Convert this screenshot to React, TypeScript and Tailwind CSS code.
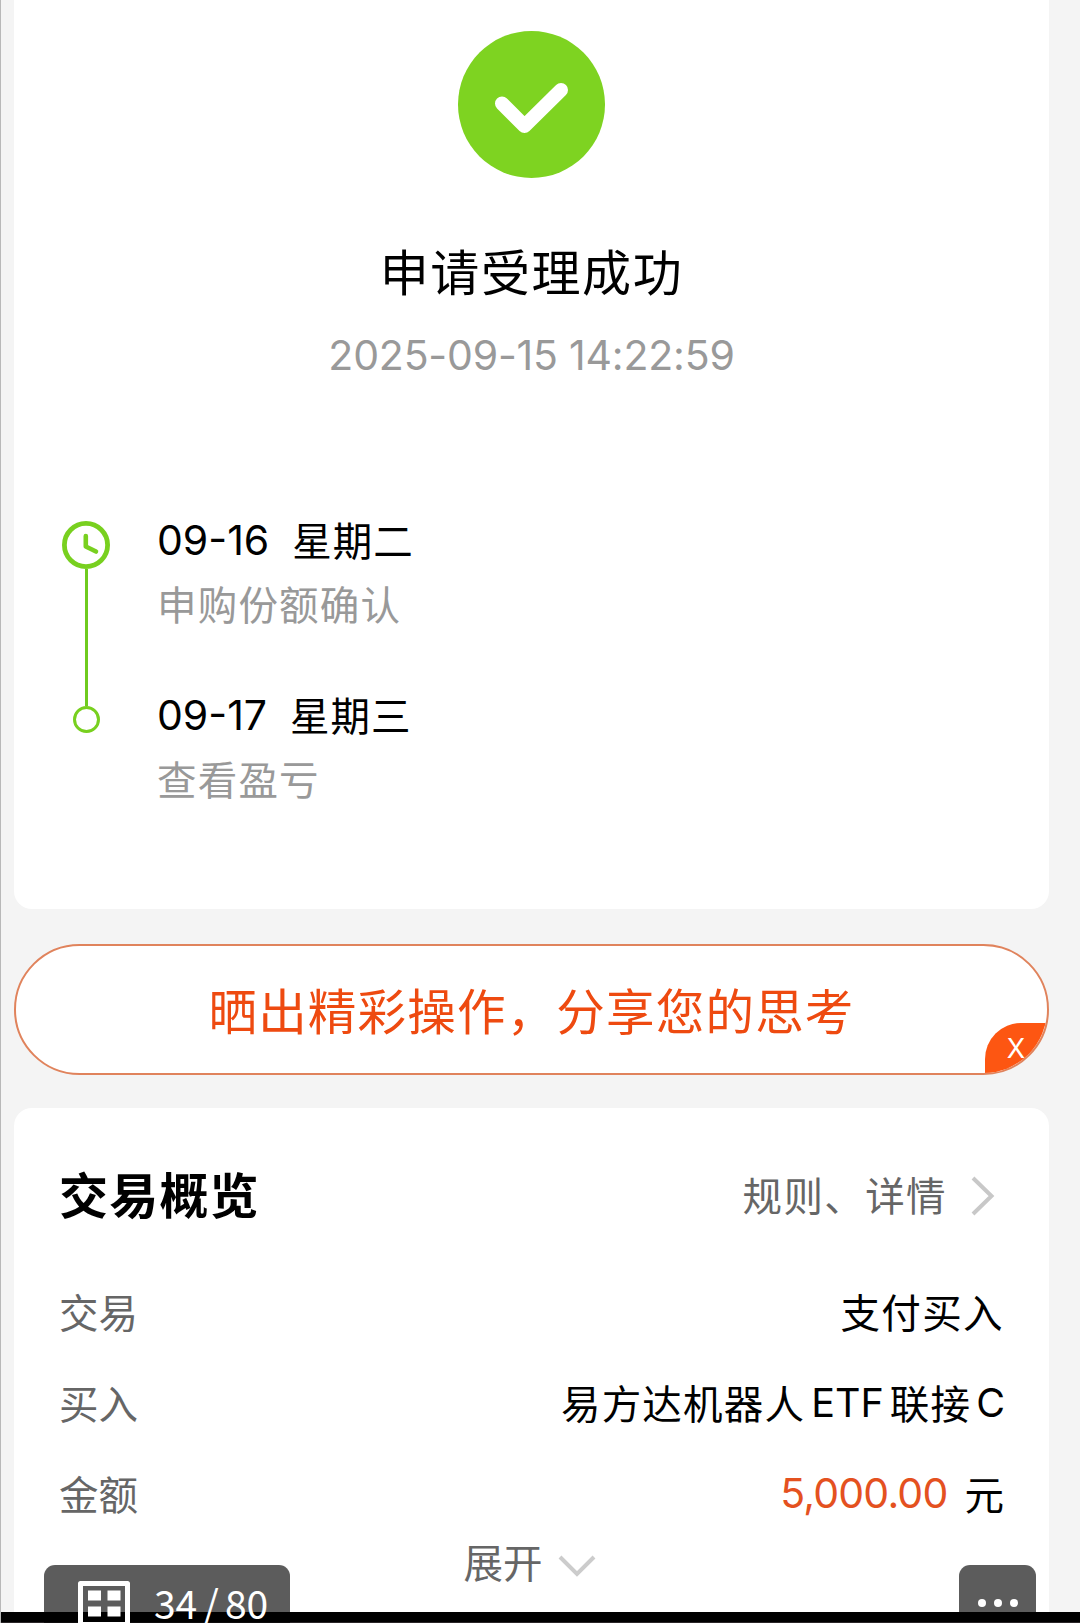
import type { ReactNode } from "react";

type TimelineItem = {
  date: string;
  weekday: string;
  text: string;
};

type DetailRowProps = {
  label: string;
  children: ReactNode;
};

const timeline: TimelineItem[] = [
  { date: "09-16", weekday: "星期二", text: "申购份额确认" },
  { date: "09-17", weekday: "星期三", text: "查看盈亏" },
];

const SuccessIcon = () => (
  <svg className="size-[147px]" viewBox="0 0 147 147" fill="none">
    <circle cx="73.5" cy="73.5" r="73.5" fill="#7ed321" />
    <path
      d="M44 72.5 66.5 95 103 59"
      stroke="#fff"
      strokeWidth="14"
      strokeLinecap="round"
      strokeLinejoin="round"
    />
  </svg>
);

const ClockIcon = () => (
  <svg className="size-12 shrink-0" viewBox="0 0 48 48" fill="none">
    <circle cx="24" cy="24" r="21.6" stroke="#78d01f" strokeWidth="4.8" />
    <path
      d="M23.8 15V25.5L34 30.5"
      stroke="#78d01f"
      strokeWidth="4.6"
      strokeLinecap="round"
      strokeLinejoin="round"
    />
  </svg>
);

const GridIcon = () => (
  <svg className="h-[42px] w-[52px]" viewBox="0 0 52 42" fill="none">
    <rect x="2.5" y="2.5" width="47" height="41" stroke="#fff" strokeWidth="5" strokeLinejoin="round" />
    <path d="M10 9.5h13v10H10zM29.5 9.5h13v10h-13zM10 25.5h13v10H10zM29.5 25.5h13v10h-13z" fill="#fff" />
  </svg>
);

const DetailRow = ({ label, children }: DetailRowProps) => (
  <div className="flex h-[91px] items-center justify-between text-[39.5px] leading-[50px]">
    <span className="text-[#666]">{label}</span>
    <span className="flex items-center text-black">{children}</span>
  </div>
);

const ResultCard = () => (
  <section className="h-[909px] rounded-b-[18px] bg-white pt-[31px]">
    <div className="flex flex-col items-center">
      <SuccessIcon />
      <h1 className="mt-[66px] text-[49px] leading-[60px] tracking-[1.6px] text-black">
        申请受理成功
      </h1>
      <p className="mt-[26px] text-[41px] leading-[50px] tracking-[-0.2px] text-[#999]">
        2025-09-15 14:22:59
      </p>
    </div>
    <div className="mt-[135px] flex pl-12">
      <div className="flex w-12 flex-col items-center pt-[6px]">
        <ClockIcon />
        <div className="h-[137px] w-[3px] bg-[#6fcb1f]" />
        <div className="size-[27px] rounded-full border-[3px] border-[#78d01f]" />
      </div>
      <ul className="ml-[47px] flex flex-col gap-[61px]">
        {timeline.map(({ date, weekday, text }) => (
          <li key={date} className="h-[114px]">
            <div className="flex h-[50px] gap-[23px] text-[39.5px] leading-[50px] text-black">
              <span className="text-[41px]">{date}</span>
              <span className="pt-[2px] tracking-[1px]">{weekday}</span>
            </div>
            <p className="mt-4 text-[39.5px] leading-[50px] tracking-[1.2px] text-[#999]">
              {text}
            </p>
          </li>
        ))}
      </ul>
    </div>
  </section>
);

const ShareBanner = () => (
  <div className="relative mt-[35px] flex h-[131px] items-center justify-center overflow-hidden rounded-[66px] border-2 border-[#e0835c] bg-white pt-[6px]">
    <span className="text-[48.5px] leading-[60px] tracking-[1.2px] text-[#ee4a10]">
      晒出精彩操作，分享您的思考
    </span>
    <button className="absolute -right-[2px] -bottom-[2px] h-[52px] w-[64px] rounded-tl-[36px] bg-[#fd5612] pr-[2px] text-[27px] leading-[50px] text-white">
      X
    </button>
  </div>
);

const OverviewCard = () => (
  <section className="mt-[33px] h-[504px] rounded-t-[18px] bg-white px-[45px] pt-[59px]">
    <div className="flex items-center justify-between leading-[60px]">
      <h2 className="text-[49px] font-bold tracking-[1.2px] text-black">交易概览</h2>
      <div className="flex items-center pr-[9px] text-[39.5px] tracking-[1.4px] text-[#666]">
        规则、详情
        <svg className="-mt-[2px] ml-[24px] h-[40px] w-[24px]" viewBox="0 0 24 40" fill="none">
          <path d="M2 2 20.5 20 2 38" stroke="#c8c8c8" strokeWidth="4" />
        </svg>
      </div>
    </div>
    <div className="mt-[41px]">
      <DetailRow label="交易">
        <span className="tracking-[1.4px]">支付买入</span>
      </DetailRow>
      <DetailRow label="买入">
        <span className="tracking-[1.2px]">易方达机器人</span>
        <span className="-mt-[3px] mr-[6px] ml-[6px]">ETF</span>
        <span className="tracking-[1.2px]">联接</span>
        <span className="-mt-[3px] -mr-[1px] ml-[5px]">C</span>
      </DetailRow>
      <DetailRow label="金额">
        <span className="-mt-[5px] mr-[17px] text-[41px] tracking-[-0.8px] text-[#e4511f]">
          5,000.00
        </span>
        元
      </DetailRow>
    </div>
    <div className="-mt-[2px] flex items-center justify-center pr-[4px] text-[39.5px] leading-[50px] text-[#666]">
      展开
      <svg className="mt-[3px] ml-[15px] h-[24px] w-[38px]" viewBox="0 0 38 24" fill="none">
        <path d="M2 3 19 20 36 3" stroke="#ccc" strokeWidth="4" />
      </svg>
    </div>
  </section>
);

export default function App() {
  return (
    <div className="relative h-[1623px] w-[1080px] overflow-hidden border-l border-[#b8b8b8] bg-[#f4f4f4] font-[Inter,'Noto_Sans_CJK_SC',sans-serif]">
      <main className="mr-[31px] ml-[13px]">
        <ResultCard />
        <ShareBanner />
        <OverviewCard />
      </main>
      <div className="absolute bottom-0 -left-px h-[11px] w-[1080px] border-b border-[#2a2628] bg-black" />
      {/* viewer controls floating over the page */}
      <div className="absolute bottom-0 left-[43px] flex h-[58px] w-[246px] rounded-t-[11px] bg-black/64 pt-[16px] pl-[34px] text-white">
        <GridIcon />
        <span className="ml-[24px] font-['Noto_Sans_CJK_SC',sans-serif] text-[39px] leading-[42px] tracking-[-0.2px] whitespace-nowrap [word-spacing:-2px]">
          34 / 80
        </span>
      </div>
      <div className="absolute right-[44px] bottom-[11px] flex h-[47px] w-[77px] justify-center gap-[8px] rounded-t-[11px] bg-black/64 pt-[34px]">
        <i className="size-2 rounded-full bg-white" />
        <i className="size-2 rounded-full bg-white" />
        <i className="size-2 rounded-full bg-white" />
      </div>
    </div>
  );
}
